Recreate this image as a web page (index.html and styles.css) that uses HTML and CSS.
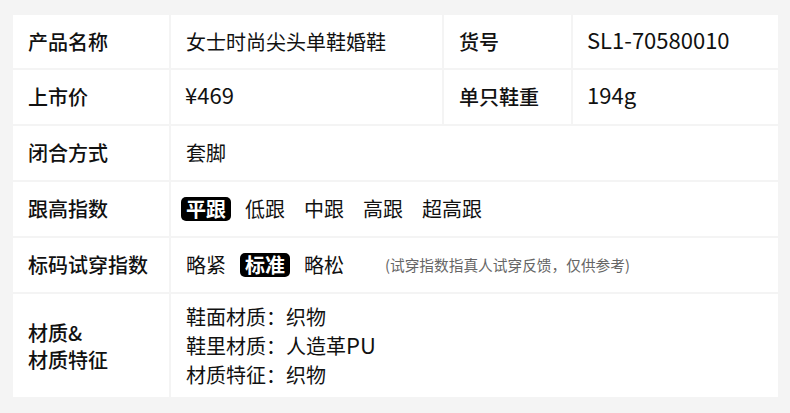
FILE: index.html
```html
<!DOCTYPE html>
<html lang="zh-CN">
<head>
<meta charset="utf-8">
<title>产品参数</title>
<link rel="stylesheet" href="styles.css">
</head>
<body>
<div class="spec">
  <div class="cell label">产品名称</div>
  <div class="cell value">女士时尚尖头单鞋婚鞋</div>
  <div class="cell label">货号</div>
  <div class="cell value latin">SL1-70580010</div>

  <div class="cell label">上市价</div>
  <div class="cell value latin">¥469</div>
  <div class="cell label">单只鞋重</div>
  <div class="cell value latin">194g</div>

  <div class="cell label">闭合方式</div>
  <div class="cell value wide">套脚</div>

  <div class="cell label">跟高指数</div>
  <div class="cell value wide">
    <div class="options">
      <span class="opt on">平跟</span>
      <span class="opt">低跟</span>
      <span class="opt">中跟</span>
      <span class="opt">高跟</span>
      <span class="opt">超高跟</span>
    </div>
  </div>

  <div class="cell label">标码试穿指数</div>
  <div class="cell value wide">
    <div class="options">
      <span class="opt">略紧</span>
      <span class="opt on">标准</span>
      <span class="opt">略松</span>
      <span class="note">(试穿指数指真人试穿反馈，仅供参考)</span>
    </div>
  </div>

  <div class="cell label multi">材质&amp;<br>材质特征</div>
  <div class="cell value wide lines">
    <div>鞋面材质：织物</div>
    <div>鞋里材质：人造革<span class="latin-run">PU</span></div>
    <div>材质特征：织物</div>
  </div>
</div>
</body>
</html>
```

FILE: styles.css
```css
html, body {
  margin: 0;
  padding: 0;
  background: #f4f4f4;
}

body {
  font-family: "Noto Sans CJK SC", "Noto Sans", sans-serif;
  color: #111;
}

.spec {
  display: grid;
  grid-template-columns: 156px 271px 127px 205px;
  grid-template-rows: 53px 54px 54px 54px 54px 103px;
  gap: 2px;
  padding: 15px 0 0 13px;
}

.cell {
  background: #fff;
  display: flex;
  align-items: center;
  font-size: 20px;
  line-height: 28px;
  padding-left: 15px;
}

.label {
  font-weight: 500;
}

.value {
  font-weight: 400;
}

.cell.latin {
  font-size: 22px;
  padding-left: 14px;
  padding-bottom: 6px;
}

.latin-run {
  font-size: 22px;
  line-height: 20px;
}

.wide {
  grid-column: 2 / 5;
}

.label.multi {
  line-height: 27px;
}

.lines {
  flex-direction: column;
  align-items: flex-start;
  justify-content: center;
  line-height: 29px;
}

.options {
  display: flex;
  align-items: center;
  gap: 9px;
  margin-left: -5px;
}

.opt {
  padding: 0 5px;
  line-height: 24px;
  border-radius: 5px;
}

.opt.on {
  background: #000;
  color: #fff;
  font-weight: 700;
}

.note {
  margin-left: 27px;
  font-size: 14.7px;
  color: #666;
  line-height: 20px;
}
```
